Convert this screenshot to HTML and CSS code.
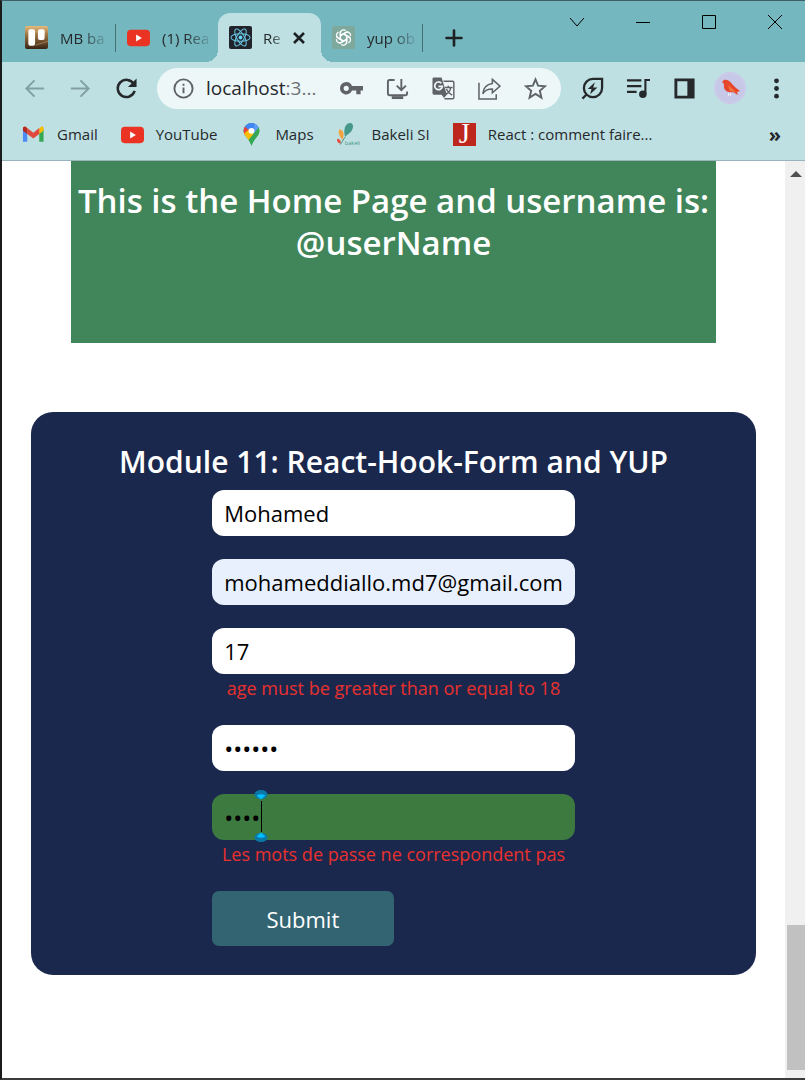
FILE: index.html
```html
<!DOCTYPE html>
<html lang="fr">
<head>
<meta charset="utf-8">
<meta name="viewport" content="width=device-width, initial-scale=1">
<title>React App</title>
<link rel="stylesheet" href="styles.css">
</head>
<body>
<div class="window">
  <header class="chrome">
    <div class="tabstrip">
      <div class="tab divided">
        <svg class="favicon" viewBox="0 0 24 24"><defs><linearGradient id="wood" x1="0" y1="0" x2="0" y2="1"><stop offset="0" stop-color="#e5bb7d"/><stop offset=".4" stop-color="#9a713f"/><stop offset="1" stop-color="#382414"/></linearGradient></defs><rect width="24" height="24" rx="2" fill="url(#wood)"/><path d="M11 20l13-4" stroke="#9a7a50" stroke-width="1"/><rect x="3.500" y="3.500" width="7" height="17" rx="2" fill="#fff"/><rect x="13.500" y="3.500" width="7" height="11" rx="2" fill="#fff"/></svg>
        <span class="tab-title">MB ba</span>
      </div>
      <div class="tab">
        <svg class="favicon" viewBox="0 0 24 24"><rect y="4" width="24" height="17" rx="4" fill="#ea3323"/><path d="M9.500 8.800v7.400l6-3.700z" fill="#fff"/></svg>
        <span class="tab-title">(1) Rea</span>
      </div>
      <div class="tab active">
        <svg class="favicon" viewBox="0 0 24 24"><rect width="24" height="24" rx="2" fill="#20232a"/><g fill="none" stroke="#69c3e0" stroke-width="1.100"><ellipse cx="12" cy="12" rx="10" ry="3.900"/><ellipse cx="12" cy="12" rx="10" ry="3.900" transform="rotate(60 12 12)"/><ellipse cx="12" cy="12" rx="10" ry="3.900" transform="rotate(120 12 12)"/></g><circle cx="12" cy="12" r="2" fill="#69d5fa"/></svg>
        <span class="tab-title">Re</span>
        <button class="tab-close" aria-label="Close tab"><svg viewBox="0 0 14 14" width="14" height="14"><path d="M2 2l10 10M12 2L2 12" stroke="#1d2124" stroke-width="2.600"/></svg></button>
      </div>
      <div class="tab divided">
        <svg class="favicon" viewBox="0 0 24 24"><rect width="24" height="24" rx="3" fill="#7fa89c"/><g fill="none" stroke="#fff" stroke-width="1.400"><path id="petal" d="M12 8.300l3.400 2v6.200c0 3-3.600 4.500-5.700 2.700M12 8.300l4.200-2.400"/><use href="#petal" transform="rotate(60 12 12)"/><use href="#petal" transform="rotate(120 12 12)"/><use href="#petal" transform="rotate(180 12 12)"/><use href="#petal" transform="rotate(240 12 12)"/><use href="#petal" transform="rotate(300 12 12)"/></g></svg>
        <span class="tab-title">yup ob</span>
      </div>
      <button class="new-tab" aria-label="New tab"><svg viewBox="0 0 18 18" width="18" height="18"><path d="M9 1.500v15M1.500 9h15" stroke="#1d2124" stroke-width="2.600" stroke-linecap="round"/></svg></button>
      <div class="controls">
        <button aria-label="Search tabs"><svg viewBox="0 0 16 16"><path d="M1 4l7 8 7-8"/></svg></button>
        <button aria-label="Minimize"><svg viewBox="0 0 16 16"><path d="M1 8.500h14"/></svg></button>
        <button aria-label="Maximize"><svg viewBox="0 0 16 16"><path d="M1.500 1.500h13v13h-13z"/></svg></button>
        <button aria-label="Close"><svg viewBox="0 0 16 16"><path d="M1 1l14 14M15 1L1 15"/></svg></button>
      </div>
    </div>

    <div class="toolbar">
      <div class="group">
        <button class="tool dim" aria-label="Back"><svg viewBox="0 0 24 24"><path d="M22 12H4M12 3.500L3.500 12l8.500 8.500"/></svg></button>
        <button class="tool dim" aria-label="Forward"><svg viewBox="0 0 24 24"><path d="M2 12h18M12 3.500l8.500 8.500-8.500 8.500"/></svg></button>
        <button class="tool" aria-label="Reload"><svg viewBox="0 0 24 24"><path d="M19.700 7.500A9 9 0 1 0 20.500 14.500" stroke-width="2.600"/><path d="M22.500 1.500v9h-9z" fill="currentColor" stroke="none"/></svg></button>
      </div>
      <div class="address">
        <button class="tool info" aria-label="Site information"><svg viewBox="0 0 24 24"><circle cx="12" cy="12" r="9.500"/><path d="M12 11v6M12 7v2.200"/></svg></button>
        <span class="url">localhost<span class="port">:3...</span></span>
        <button class="tool" aria-label="Passwords"><svg viewBox="0 0 24 24"><path fill="currentColor" stroke="none" fill-rule="evenodd" d="M6.500 5.200a6.500 6.500 0 1 0 6 9H17V18h4.500v-3.800H24V9.500H12.500a6.500 6.500 0 0 0-6-4.300zm0 3.900a2.700 2.700 0 1 1 0 5.400 2.700 2.700 0 0 1 0-5.400z"/></svg></button>
        <button class="tool" aria-label="Install app"><svg viewBox="0 0 24 24"><path d="M9 3.200H3.500a1.500 1.500 0 0 0-1.500 1.500v12.800a1.500 1.500 0 0 0 1.500 1.500h17a1.500 1.500 0 0 0 1.500-1.500V15"/><path d="M16 2v11M11.200 9l4.800 4.800L20.800 9"/><path d="M6 21.500h12" stroke-width="3"/></svg></button>
        <button class="tool" aria-label="Translate"><svg viewBox="0 0 24 24"><path d="M12 4.500h9.500a1.300 1.300 0 0 1 1.300 1.300v15.500a1.300 1.300 0 0 1-1.300 1.300H13" stroke-width="1.500"/><path d="M13.500 11h8M17 9v2M19.500 11c-.5 3-3 6-5 7M15 12.500c1 2.500 3.500 5 6 6.500" stroke-width="1.500"/><path d="M2 .5h8l5.500 18H2A1.500 1.500 0 0 1 .5 17V2A1.500 1.500 0 0 1 2 .5zM10 18.500h5.500L12.500 22z" fill="currentColor" stroke="none"/><path d="M9.800 6.500A4 4 0 1 0 10.800 9.800H6.800" stroke="#eef7f8" stroke-width="1.800"/></svg></button>
        <button class="tool" aria-label="Share"><svg viewBox="0 0 24 24"><path d="M1 6v17h18v-5" stroke-width="1.600"/><path d="M15 2.500l8 7-8 7v-4c-5 0-8 1.500-10 5 .5-6 4-10 10-10.800z" stroke-width="1.600"/></svg></button>
        <button class="tool" aria-label="Bookmark"><svg viewBox="0 0 24 24"><path d="M12 2.500l2.700 6.500 7.300.6-5.500 4.800 1.700 7.100-6.200-3.800-6.200 3.800 1.700-7.100L2 9.600 9.300 9z"/></svg></button>
      </div>
      <div class="group">
        <button class="tool" aria-label="Energy saver"><svg viewBox="0 0 24 24"><path d="M22 2v9.500A9.500 9.500 0 1 1 12.500 2zM5.500 18.500L1.500 22.500" stroke-width="2.400"/><path d="M14.500 5.500l-7.500 7h4L9.500 18l7.700-7h-4.500z" fill="currentColor" stroke="none"/></svg></button>
        <button class="tool" aria-label="Media controls"><svg viewBox="0 0 24 24"><path d="M0 3.500h15M0 9.500h15M0 15.500h10M24 3.200h-4.800V18" stroke-width="2.200"/><circle cx="16.500" cy="18" r="3.900" fill="currentColor" stroke="none"/></svg></button>
        <button class="tool" aria-label="Side panel"><svg viewBox="0 0 24 24"><path fill="currentColor" stroke="none" fill-rule="evenodd" d="M1.500 1.500h21v21h-21zM4.500 4.500v15H15v-15z"/></svg></button>
        <button class="tool avatar" aria-label="Profile"><svg viewBox="0 0 32 32"><circle cx="16" cy="16" r="16" fill="#c7c7e8" stroke="none"/><circle cx="16" cy="16" r="14.800" fill="none" stroke="#d5d2ee" stroke-width="1" stroke-dasharray="2 1"/><path d="M8 10l2-2c3-1 6 1 8 4l4 4 4 3-3 1 1 3-5-3c-6 1-10-2-9-8z" fill="#e5462c" stroke="none"/><path d="M14 13l8 7-6-1z" fill="#f0753e" stroke="none"/><path d="M14.500 21.500v2M16.500 21.500v2" stroke="#fff" stroke-width="1"/></svg></button>
        <button class="tool" aria-label="Menu"><svg viewBox="0 0 24 24"><g fill="currentColor" stroke="none"><circle cx="12" cy="4" r="2.500"/><circle cx="12" cy="12" r="2.500"/><circle cx="12" cy="20" r="2.500"/></g></svg></button>
      </div>
    </div>

    <nav class="bookmarks" aria-label="Bookmarks">
      <a href="#gmail" class="bookmark"><svg class="favicon" viewBox="0 0 24 24"><path d="M1 6v13.500h4.500V10z" fill="#4c8bf5"/><path d="M22.500 6v13.500H18V10z" fill="#34a853"/><path d="M18 5.500l2-1.500c1.300-.8 2.500 0 2.500 1.500V8L18 11.500z" fill="#fbbc04"/><path d="M5.500 5.300l6.300 4.900L18 5.300v6.200l-6.200 4.700-6.300-4.700z" fill="#e04a3c"/><path d="M1 5.500C1 4 2.500 3 3.800 4l1.700 1.300v6.200L1 8z" fill="#b8291d"/></svg>Gmail</a>
      <a href="#youtube" class="bookmark"><svg class="favicon" viewBox="0 0 24 24"><rect y="4" width="24" height="17" rx="4" fill="#ea3323"/><path d="M9.500 8.800v7.400l6-3.700z" fill="#fff"/></svg>YouTube</a>
      <a href="#maps" class="bookmark"><svg class="favicon" viewBox="0 0 24 24"><defs><clipPath id="pin"><path d="M12 0a8.200 8.200 0 0 1 8.200 8.200c0 6-6.200 8-8.200 15.800C10 16.200 3.800 14.200 3.800 8.200A8.200 8.200 0 0 1 12 0z"/></clipPath></defs><g clip-path="url(#pin)"><path fill="#34a853" d="M0 0h24v24H0z"/><path fill="#4285f4" d="M0 0h24L12 13 0 7z"/><path fill="#5f9df7" d="M15 0h9v5l-9 6z"/><path fill="#e94335" d="M3 2l7 6-5 5-3-3z"/><path fill="#fbbc04" d="M3 12l7-6 5 6-8 8z"/><path fill="#34a853" d="M20 4l-13 16 5 4 12-12z"/></g><circle cx="12" cy="8.200" r="3.100" fill="#fff"/></svg>Maps</a>
      <a href="#bakeli" class="bookmark"><svg class="favicon" viewBox="0 0 24 24"><path d="M14 0c3.500.5 3.500 5 1 8.500C13 11 10.500 11.500 8.500 14.500 6.500 8 8 0 14 0z" fill="#45988a"/><path d="M3 6.500c4 1 4.500 6 3 11C3 15 0 9 3 6.500z" fill="#f2a23c"/><path d="M0 16.500c3 0 4 2 4 5-3 0-4-2-4-5z" fill="#e44b3c"/><path d="M3.500 22.500l5-8" stroke="#45988a"/><text x="8" y="23" class="logo-word">bakeli</text></svg>Bakeli SI</a>
      <a href="#react" class="bookmark"><svg class="favicon" viewBox="0 0 24 24"><path fill="#bd271d" d="M0 0h24v24H0z"/><text x="6" y="21" class="logo-letter">J</text></svg>React : comment faire...</a>
      <button class="overflow" aria-label="More bookmarks">»</button>
    </nav>
  </header>

  <div class="viewport">
    <main class="page">
      <section class="hero">
        <h1>This is the Home Page and username is: @userName</h1>
      </section>
      <section class="card">
        <h2>Module 11: React-Hook-Form and YUP</h2>
        <form class="form">
          <div class="field"><input type="text" aria-label="Full name" value="Mohamed"></div>
          <div class="field"><input class="autofilled" type="email" aria-label="Email" value="mohameddiallo.md7@gmail.com"></div>
          <div class="field"><input type="text" aria-label="Age" value="17" aria-describedby="age-error"><p class="error" id="age-error">age must be greater than or equal to 18</p></div>
          <div class="field"><input type="password" aria-label="Password" value="secret"></div>
          <div class="field">
            <input class="focused" type="password" aria-label="Confirm password" value="pass" aria-describedby="confirm-error">
            <svg class="caret" viewBox="0 0 14 52" aria-hidden="true"><ellipse cx="7" cy="4.500" rx="6.500" ry="4.500" fill="#0b78a6"/><path d="M2.500 5.500q4.500-2.500 9 0L7 9.500z" fill="#00bfff"/><path d="M7.500 11v31" stroke="#000"/><ellipse cx="7" cy="47.500" rx="6.500" ry="4.500" fill="#0b78a6"/><path d="M2.500 46.500q4.500 2.500 9 0L7 42.500z" fill="#00bfff"/></svg>
            <p class="error" id="confirm-error">Les mots de passe ne correspondent pas</p>
          </div>
          <button class="submit" type="button">Submit</button>
        </form>
      </section>
    </main>
    <div class="scrollbar" aria-hidden="true"><span class="arrow"></span><span class="thumb"></span></div>
  </div>
</div>
</body>
</html>
```
FILE: styles.css
```css
* { box-sizing: border-box; }
body {
  margin: 0;
  font-family: "Open Sans", "Noto Sans", sans-serif;
  color: #25292c;
  background: #fff;
}
button {
  padding: 0;
  border: 0;
  background: none;
  color: inherit;
  font: inherit;
}
h1, h2, p { margin: 0; }
svg { display: block; }

.window {
  display: flex;
  flex-direction: column;
  min-height: 100vh;
  border-top: 1px solid #3f5f68;
  border-left: 2px solid #1b1b1b;
  border-bottom: 2px solid #3c3c3c;
}
.chrome {
  background: #bfe0e2;
  border-bottom: 1px solid #98b3bb;
}

/* Tabs */
.tabstrip {
  display: flex;
  align-items: flex-end;
  height: 61px;
  padding-left: 12px;
  background: #74b7bf;
}
.tab {
  position: relative;
  display: flex;
  align-items: center;
  gap: 12px;
  width: 102px;
  height: 49px;
  padding: 0 8px 0 11px;
  font-size: 15px;
}
.divided::after {
  content: "";
  position: absolute;
  right: 0;
  top: 11px;
  width: 1px;
  height: 28px;
  background: #456e75;
}
.favicon { width: 23px; height: 23px; flex: none; }
.tab-title {
  white-space: nowrap;
  mask-image: linear-gradient(to right, #000 calc(100% - 24px), rgba(0, 0, 0, .15));
}
.tab.active {
  gap: 11px;
  width: 103px;
  background: #bfe0e2;
  border-radius: 12px 12px 0 0;
}
.active .tab-title { mask-image: linear-gradient(to right, #000 8px, rgba(0, 0, 0, .4)); }
.active::before,
.active::after {
  content: "";
  position: absolute;
  bottom: 0;
  width: 12px;
  height: 12px;
}
.active::before { right: 100%; background: radial-gradient(circle at 0 0, transparent 12px, #bfe0e2 12px); }
.active::after { left: 100%; background: radial-gradient(circle at 100% 0, transparent 12px, #bfe0e2 12px); }
.new-tab {
  display: grid;
  place-items: center;
  width: 62px;
  height: 49px;
}
.controls {
  display: flex;
  align-self: flex-start;
  gap: 50px;
  margin-left: auto;
  padding: 13px 22px 0 0;
}
.controls svg { width: 16px; height: 16px; fill: none; stroke: #000; stroke-width: 1; }

/* Toolbar */
.toolbar {
  display: flex;
  align-items: center;
  gap: 8px;
  height: 52px;
  padding: 0 6px 0 9px;
}
.group { display: flex; }
.tool {
  display: grid;
  place-items: center;
  flex: none;
  width: 46px;
  height: 40px;
}
.tool svg { width: 23px; height: 23px; fill: none; stroke: currentColor; stroke-width: 2; }
.tool.avatar svg { width: 32px; height: 32px; }
.dim { color: #829fa3; }
.address {
  display: flex;
  align-items: center;
  flex: 1;
  min-width: 0;
  height: 41px;
  padding: 0 3px;
  border-radius: 21px;
  background: #eef7f8;
  color: #5f6368;
}
.url {
  flex: 1;
  min-width: 0;
  overflow: hidden;
  white-space: nowrap;
  font-size: 19px;
  color: #25292c;
}
.port { color: #6a7073; }

/* Bookmarks */
.bookmarks {
  display: flex;
  align-items: center;
  gap: 23px;
  height: 46px;
  padding: 0 24px 6px 20px;
  font-size: 15px;
}
.bookmark {
  display: flex;
  align-items: center;
  gap: 12px;
  color: inherit;
  text-decoration: none;
  white-space: nowrap;
}
.overflow { margin-left: auto; font-size: 20px; font-weight: 700; }
.logo-word { font: 6px "Open Sans", sans-serif; fill: #45988a; }
.logo-letter { font: 30px "Liberation Serif", serif; fill: #fff; }

/* Page */
.viewport { display: flex; flex: 1; }
.page { flex: 1; min-width: 0; background: #fff; }
.hero {
  margin: 0 69px;
  padding: 19px 0 79px;
  background: #41865a;
  color: #fff;
  text-align: center;
}
.hero h1 { font-size: 33px; font-weight: 600; line-height: 42px; }
.card {
  margin: 69px 29px 0;
  padding: 30px 0 29px;
  border-radius: 22px;
  background: #1b284d;
  text-align: center;
}
.card h2 { color: #fff; font-size: 30px; font-weight: 600; line-height: 40px; }
.form {
  display: flex;
  flex-direction: column;
  gap: 23px;
  width: 50%;
  margin: 8px auto 0;
}
.field { position: relative; }
.field input {
  display: block;
  width: 100%;
  height: 46px;
  padding: 0 12px;
  border: 0;
  border-radius: 12px;
  background: #fff;
  color: #000;
  font: inherit;
  font-size: 22px;
}
.field [type="password"] { font-size: 24px; }
.field .autofilled { background: #e8f0fe; }
.field .focused { background: #3d7a40; }
.caret {
  position: absolute;
  left: 42px;
  top: -4px;
  width: 14px;
  height: 52px;
}
.error { color: #e8302e; font-size: 18px; line-height: 28px; white-space: nowrap; }
.submit {
  width: 50%;
  height: 55px;
  border-radius: 7px;
  background: #336472;
  color: #fff;
  font-size: 22px;
}

/* Scrollbar */
.scrollbar {
  display: flex;
  flex-direction: column;
  justify-content: space-between;
  align-items: center;
  width: 20px;
  padding: 10px 0 8px 2px;
  background: #f0f0f0;
}
.arrow {
  border: 6px solid transparent;
  border-top: 0;
  border-bottom: 6px solid #505050;
}
.thumb { width: 18px; height: 145px; background: #c1c1c1; }
```
